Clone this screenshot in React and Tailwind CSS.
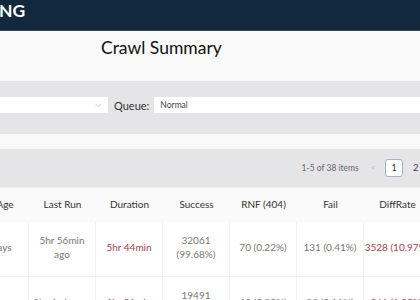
import React from "react";

const cols = ["Age", "Last Run", "Duration", "Success", "RNF (404)", "Fail", "DiffRate"];

const rows = [
  [["5 days"], ["5hr 56min", "ago"], ["5hr 44min"], ["32061", "(99.68%)"], ["70 (0.22%)"], ["131 (0.41%)"], ["3528 (10.97%)"]],
  [["5 days"], ["2hr 4min ago"], ["1hr 21min"], ["19491", "(99.74%)"], ["40 (0.20%)"], ["22 (0.11%)"], ["361 (1.85%)"]],
];

const red = [2, 6];

export default function App() {
  return (
    <div
      className="w-[420px] h-[300px] overflow-hidden bg-[#e5e5e8] flex flex-col"
      style={{ fontFamily: 'Lato, "Open Sans", sans-serif' }}
    >
      <div className="h-[31px] shrink-0 bg-[#12293d] border-b border-[#2f475b] flex items-start pt-[1px]">
        <span className="text-white font-bold text-[17.5px] leading-[20px] -ml-[1px]">NG</span>
      </div>
      <div className="h-[50px] shrink-0 bg-[#fafafa] pl-[101px] pt-[5px]">
        <span className="text-[17.5px] text-[#111] leading-[24px]">Crawl Summary</span>
      </div>
      <div className="h-[16px] shrink-0" />
      <div className="h-[16px] shrink-0 flex items-center">
        <div className="w-[108px] h-full bg-white flex items-center justify-end pr-[6px]">
          <svg width="7" height="5" viewBox="0 0 7 5" fill="none" stroke="#c8c8c8" strokeWidth="0.8">
            <path d="M0.5 0.8 L3.5 4 L6.5 0.8" />
          </svg>
        </div>
        <span className="ml-[6px] text-[11px] text-[#333] leading-none">Queue:</span>
        <div className="ml-[5px] flex-1 h-full bg-white flex items-center pl-[6px]">
          <span className="text-[8.5px] text-[#444]">Normal</span>
        </div>
      </div>
      <div className="h-[21px] shrink-0" />
      <div className="h-[15px] shrink-0 bg-[#f9f9fa]" />
      <div className="h-[38px] shrink-0 flex items-center justify-end pr-0">
        <span className="text-[8.5px] text-[#666]">1-5 of 38 items</span>
        <span className="ml-[12px] text-[9px] text-[#c4c4c4]">&lt;</span>
        <div className="ml-[9px] w-[18px] h-[18px] rounded-[3px] border border-[#9fb4c9] bg-white flex items-center justify-center text-[9px] text-[#333]">
          1
        </div>
        <span className="ml-[10px] w-[7px] text-[9.5px] text-[#444]">2</span>
      </div>
      <div className="bg-[#fafafa] h-[35px] shrink-0 flex -ml-[33px] border-t border-[#f0f0f0]">
        {cols.map((c, i) => (
          <div
            key={c}
            className={`${i === 0 ? "w-[62px] pl-[14px]" : "w-[67px]"} shrink-0 flex items-center justify-center text-[10px] text-[#333] whitespace-nowrap pb-[2px]`}
          >
            {c}
          </div>
        ))}
      </div>
      <div className="bg-white flex-1 flex flex-col">
        {rows.map((r, ri) => (
          <div key={ri} className="h-[55px] shrink-0 flex -ml-[33px] border-b border-[#f2f2f2]">
            {r.map((lines, ci) => (
              <div
                key={ci}
                className={`${ci === 0 ? "w-[62px]" : "w-[67px]"} shrink-0 pt-[11px] border-r border-[#f3f3f3]`}
              >
                <div
                  className={`h-[28px] flex flex-col justify-center items-center text-[10px] leading-[14px] whitespace-nowrap ${
                    red.includes(ci) ? "text-[#a5414f]" : "text-[#777]"
                  }`}
                >
                  {lines.map((l, li) => (
                    <span key={li}>{l}</span>
                  ))}
                </div>
              </div>
            ))}
          </div>
        ))}
      </div>
    </div>
  );
}
